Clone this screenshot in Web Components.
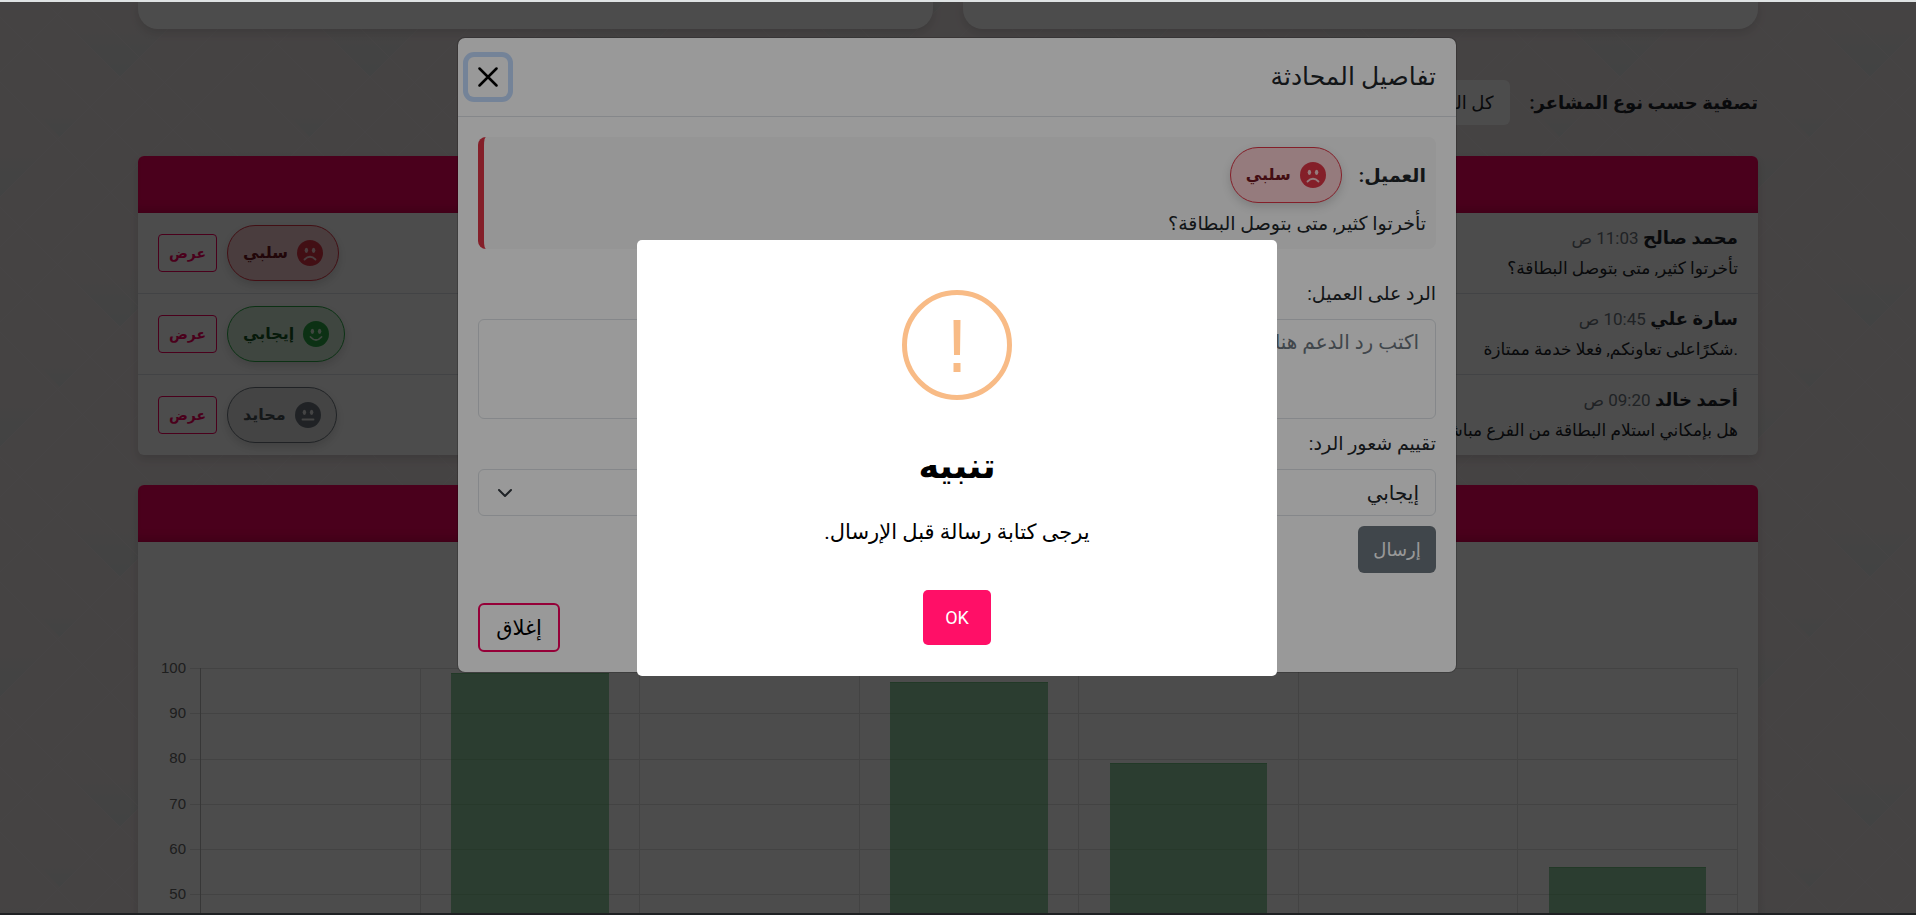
<!DOCTYPE html>
<html lang="ar" dir="rtl">
<head>
<meta charset="utf-8">
<title>تفاصيل المحادثة</title>
<style>
html,body{margin:0;height:100%}
body{font-family:"Roboto","DejaVu Sans",sans-serif;color:#212529;overflow:hidden;
--brand:#f8005e;--danger:#dc3545;--line:#dee2e6}
</style>
</head>
<body>
<app-frame>
  <dashboard-page></dashboard-page>
  <chat-dialog></chat-dialog>
  <alert-dialog></alert-dialog>
</app-frame>
<script>
const define = (name, html, setup) => customElements.define(name, class extends HTMLElement {
  constructor() {
    super();
    const t = document.createElement('template');
    t.innerHTML = '<style>*{box-sizing:border-box}button,input,select,textarea{font-family:inherit;margin:0}</style>' + html;
    this.attachShadow({mode: 'open'}).append(t.content.cloneNode(true));
  }
  connectedCallback() { if (setup) setup(this, this.shadowRoot); }
});

const tile = `<svg xmlns='http://www.w3.org/2000/svg' width='250' height='250'><defs><linearGradient id='g' x1='0' y1='0' x2='0' y2='1'><stop offset='0' stop-color='#dde2e0' stop-opacity='0'/><stop offset='1' stop-color='#dde2e0'/></linearGradient></defs><rect width='250' height='250' fill='#e9e0e1'/><g fill='url(#g)'><path d='M60 17h120l-60 60z'/><path d='M-65 142H55L-5 202z'/><path d='M185 142h120l-60 60z'/><path d='M35 112h50l-25 25z'/><path d='M160 237h50l-25 25z'/><path d='M160 -13h50l-25 25z'/></g><g stroke='#ece5e6' fill='none'><path d='M0 197L197 0M-3 250L250 -3M53 250L250 53M0 72L72 0M178 250l72-72M0 -43L250 207M0 17l233 233M0 207l43 43M0 82l168 168M82 0l168 168'/></g></svg>`;

define('app-frame', `<style>
:host{display:block;position:relative;height:100vh;box-sizing:border-box;overflow:hidden;border-top:2px solid #dfe3e4;border-bottom:2px solid #1f2123}
</style><slot></slot>`);

define('mood-badge', `<style>
:host{display:inline-flex;align-items:center;gap:9px;height:56px;padding:0 15px;box-sizing:border-box;border:1px solid var(--edge);border-radius:28px;background:var(--fill);color:var(--ink);font-weight:700;font-size:16px;line-height:24px;box-shadow:0 4px 10px rgba(0,0,0,.15);white-space:nowrap}
:host([mood=bad]){--edge:#dc3545;--fill:#f8cdd1;--ink:#701620}
:host([mood=good]){--edge:#28a745;--fill:#d4edd6;--ink:#155724}
:host([mood=flat]){--edge:#6c757d;--fill:#e4e4e5;--ink:#495057}
svg{flex:none;width:26px;height:26px}
</style><svg viewBox="0 0 26 26" aria-hidden="true"><circle cx="13" cy="13" r="13" fill="var(--edge)"/><g fill="var(--fill)"><ellipse cx="9.400" cy="10.300" rx="1.700" ry="2.600"/><ellipse cx="16.600" cy="10.300" rx="1.700" ry="2.600"/></g><path fill="none" stroke="var(--fill)" stroke-width="1.800" stroke-linecap="round"/></svg><slot></slot>`,
(el, r) => r.querySelector('path').setAttribute('d', {
  bad: 'M7.500 19.500Q13 14 18.500 19.500', good: 'M7.500 16Q13 22 18.500 16', flat: 'M7.500 17.500H18.500'}[el.getAttribute('mood')]));

define('panel-card', `<style>
:host{display:block;background:#fff;border-radius:6px;overflow:hidden;box-shadow:0 4px 10px rgba(0,0,0,.12)}
header{height:57px;background:var(--brand);box-shadow:inset 0 -10px 10px -6px rgba(0,0,0,.15)}
</style><header></header><slot></slot>`);

define('chat-row', `<style>
:host{display:flex;align-items:center;justify-content:space-between;height:80px;padding:0 20px}
:host(:not(:last-child)){height:81px;border-bottom:1px solid var(--line)}
p{margin:0;font-size:17px;line-height:30px;white-space:nowrap}
.who{font-size:18px}
time{font-size:17px;color:#6c757d}
.end{display:flex;align-items:center;gap:10px}
button{width:59px;height:38px;padding:0;border:1px solid var(--brand);border-radius:4px;background:none;color:var(--brand);font-size:14px;font-weight:700}
</style><div><p class="who"><b></b> <time></time></p><p class="text"></p></div>
<div class="end"><slot></slot><button type="button">عرض</button></div>`,
(el, r) => {
  r.querySelector('b').textContent = el.getAttribute('name');
  r.querySelector('time').textContent = el.getAttribute('time');
  r.querySelector('.text').textContent = el.getAttribute('text');
});

define('score-chart', `<style>
:host{display:flex;direction:ltr;padding:126px 20px 20px;font:15px/20px "Liberation Sans",Arial,sans-serif;color:#666}
.scale{width:28px;height:452px;display:grid;grid-template-rows:repeat(10,1fr);text-align:right}
.scale span{margin-top:-10px}
.ticks{width:14px}
.ticks,.plot{height:453px;background:repeating-linear-gradient(#e3e3e3 0 1px,transparent 1px 10%)}
.ticks{background-position:4px 0;background-repeat:no-repeat}
.plot{flex:1;display:grid;grid-template-columns:repeat(7,1fr);border-right:1px solid #e3e3e3}
.plot div{display:flex;align-items:flex-end;justify-content:center;border-left:1px solid #e3e3e3}
.plot div:first-child{border-color:#bbb}
.plot i{width:72%;background:rgba(40,160,65,.5);border-top:1px solid rgba(40,160,65,.3)}
</style><div class="scale"></div><div class="ticks"></div><div class="plot"></div>`,
(el, r) => {
  r.querySelector('.scale').innerHTML = [100,90,80,70,60,50].map(n => `<span>${n}</span>`).join('');
  r.querySelector('.plot').innerHTML = [0,99,0,97,79,0,56].map(n => `<div>${n ? `<i style="height:${n}%"></i>` : ''}</div>`).join('');
});

define('dashboard-page', `<style>
:host{display:block;min-height:100%;padding:0 20px 0 0;box-sizing:border-box;background:url("data:image/svg+xml,${encodeURIComponent(tile).replace(/'/g, '%27')}") 0 -2px}
main{width:85.500%;max-width:1620px;margin:0 auto;display:flex;flex-direction:column;gap:30px}
.top{display:grid;grid-template-columns:1fr 1fr;gap:30px}
.top div{height:27px;background:#fff;border-radius:0 0 20px 20px;box-shadow:0 4px 10px rgba(0,0,0,.12)}
.filter{display:flex;align-items:center;gap:20px;padding:21px 0 1px}
label{font-size:18px;font-weight:700;white-space:nowrap}
select{appearance:none;width:250px;height:45px;padding:0 16px;border:0;border-radius:6px;background:#fff;color:#212529;font-size:18px}
</style><main>
<div class="top"><div></div><div></div></div>
<div class="filter"><label for="mood">تصفية حسب نوع المشاعر:</label><select id="mood"><option>كل المشاعر</option></select></div>
<panel-card>
<chat-row name="محمد صالح" time="11:03 ص" text="تأخرتوا كثير, متى بتوصل البطاقة؟"><mood-badge mood="bad">سلبي</mood-badge></chat-row>
<chat-row name="سارة علي" time="10:45 ص" text=".شكرًاعلى تعاونكم, فعلا خدمة ممتازة"><mood-badge mood="good">إيجابي</mood-badge></chat-row>
<chat-row name="أحمد خالد" time="09:20 ص" text="هل بإمكاني استلام البطاقة من الفرع مباشرة؟"><mood-badge mood="flat">محايد</mood-badge></chat-row>
</panel-card>
<panel-card><score-chart></score-chart></panel-card>
</main>`);

define('chat-dialog', `<style>
:host{position:absolute;inset:0;background:rgba(0,0,0,.5);padding:35px 2px 0 0;box-sizing:border-box}
section{width:1000px;max-width:94%;margin:0 auto;background:#fff;background-clip:padding-box;border:1px solid rgba(0,0,0,.18);border-radius:8px}
header{display:flex;align-items:center;justify-content:space-between;height:79px;padding:0 20px 0 10px;border-bottom:1px solid var(--line)}
h5{margin:0;font-size:25px;font-weight:400;line-height:36px}
.x{width:40px;height:40px;padding:10px;border:0;border-radius:6px;background:none;box-shadow:0 0 0 5px #c2dbfe}
.x svg{display:block;width:20px;height:20px}
.body{padding:20px;display:flex;flex-direction:column}
.quote{height:112px;padding:10px;border-left:6px solid var(--danger);border-radius:8px;background:#f8f8f8}
.quote div{display:flex;align-items:center;gap:17px;height:56px}
.quote b{font-size:19px}
.quote p{margin:4px 0;font-size:19px;line-height:34px}
label{font-size:19px;line-height:30px}
.l1{margin:30px 0 10px}
.l2{margin:10px 0}
textarea,select{display:block;width:100%;border:1px solid var(--line);border-radius:6px;background:#fff;color:#212529;font-size:20px;padding:6px 16px}
textarea{height:100px;line-height:32px;resize:none}
textarea::placeholder{color:#6c757d;opacity:1}
select{appearance:none;height:47px;padding:0 16px;background:#fff url("data:image/svg+xml,%3Csvg xmlns='http://www.w3.org/2000/svg' viewBox='0 0 16 16'%3E%3Cpath fill='none' stroke='%23343a40' stroke-linecap='round' stroke-linejoin='round' stroke-width='2' d='m2 5 6 6 6-6'/%3E%3C/svg%3E") 18px center/16px no-repeat}
.send{align-self:flex-start;width:78px;height:47px;margin-top:10px;border:0;border-radius:6px;background:#6c757d;color:#fff;font-size:18px}
footer{display:flex;justify-content:flex-end;padding:10px 20px 20px}
.close{width:82px;height:49px;padding:0;border:2px solid var(--brand);border-radius:6px;background:none;color:#000;font-size:21px}
</style><section role="dialog" aria-labelledby="t">
<header><h5 id="t">تفاصيل المحادثة</h5><button class="x" type="button" aria-label="إغلاق"><svg viewBox="0 0 20 20"><path d="M1.500 1.500L18.500 18.500M18.500 1.500L1.500 18.500" stroke="#000" stroke-width="2.500" stroke-linecap="round"/></svg></button></header>
<div class="body">
<div class="quote"><div><b>العميل:</b><mood-badge mood="bad">سلبي</mood-badge></div><p>تأخرتوا كثير, متى بتوصل البطاقة؟</p></div>
<label class="l1" for="reply">الرد على العميل:</label><textarea id="reply" placeholder="اكتب رد الدعم هنا..."></textarea>
<label class="l2" for="rate">تقييم شعور الرد:</label><select id="rate"><option>إيجابي</option></select>
<button class="send" type="button">إرسال</button>
</div>
<footer><button class="close" type="button">إغلاق</button></footer>
</section>`);

define('alert-dialog', `<style>
:host{position:absolute;inset:0;background:rgba(0,0,0,.4);display:flex;align-items:center;justify-content:center;padding-right:2px;box-sizing:border-box}
section{width:640px;max-width:90%;padding:50px 20px 31px;border-radius:5px;background:#fff;color:#000;display:flex;flex-direction:column;align-items:center}
svg{width:110px;height:110px}
h2{margin:42px 0 0;font-size:35px;line-height:50px}
p{margin:22px 0 40px;font-size:21px;line-height:36px}
button{width:68px;height:55px;border:0;border-radius:5px;background:#ff0f67;color:#fff;font-size:18px}
</style><section role="alertdialog" aria-labelledby="t">
<svg viewBox="0 0 110 110" aria-hidden="true"><circle cx="55" cy="55" r="52.500" fill="none" stroke="#f8bb86" stroke-width="5"/><path d="M51.500 30H58.500L58 65H52ZM51.500 73H58.500V82H51.500Z" fill="#f8bb86"/></svg>
<h2 id="t">تنبيه</h2><p>يرجى كتابة رسالة قبل الإرسال.</p><button type="button">OK</button></section>`);
</script>
</body>
</html>
